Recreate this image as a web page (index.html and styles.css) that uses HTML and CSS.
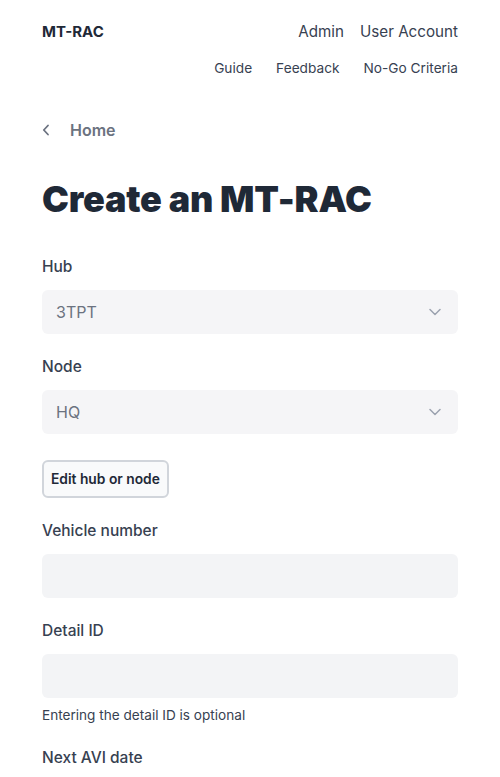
FILE: index.html
```html
<!DOCTYPE html>
<html lang="en">
<head>
<meta charset="utf-8">
<title>Create an MT-RAC</title>
<link rel="stylesheet" href="styles.css">
</head>
<body>
<div class="page">
  <header class="header">
    <div class="brand">MT-RAC</div>
    <div class="nav">
      <div class="nav-main">
        <a href="#">Admin</a>
        <a href="#">User Account</a>
      </div>
      <div class="nav-sub">
        <a href="#">Guide</a>
        <a href="#">Feedback</a>
        <a href="#">No-Go Criteria</a>
      </div>
    </div>
  </header>

  <a class="back" href="#">
    <svg width="8" height="12" viewBox="0 0 8 12" aria-hidden="true"><path d="M6 1.5 L1.8 6 L6 10.5" fill="none" stroke="#6b7280" stroke-width="1.8" stroke-linecap="round" stroke-linejoin="round"/></svg>
    <span>Home</span>
  </a>

  <h1 class="title">Create an MT-RAC</h1>

  <form class="form">
    <div class="field">
      <label class="label">Hub</label>
      <div class="select">
        <span>3TPT</span>
        <svg width="12" height="8" viewBox="0 0 12 8" aria-hidden="true"><path d="M1 1.5 L6 6.5 L11 1.5" fill="none" stroke="#9ca3af" stroke-width="1.5" stroke-linecap="round" stroke-linejoin="round"/></svg>
      </div>
    </div>
    <div class="field">
      <label class="label">Node</label>
      <div class="select">
        <span>HQ</span>
        <svg width="12" height="8" viewBox="0 0 12 8" aria-hidden="true"><path d="M1 1.5 L6 6.5 L11 1.5" fill="none" stroke="#9ca3af" stroke-width="1.5" stroke-linecap="round" stroke-linejoin="round"/></svg>
      </div>
    </div>
    <div class="actions">
      <button type="button" class="btn">Edit hub or node</button>
    </div>
    <div class="field">
      <label class="label">Vehicle number</label>
      <div class="input"></div>
    </div>
    <div class="field">
      <label class="label">Detail ID</label>
      <div class="input"></div>
      <p class="help">Entering the detail ID is optional</p>
    </div>
    <div class="field">
      <label class="label">Next AVI date</label>
    </div>
  </form>
</div>
</body>
</html>
```

FILE: styles.css
```css
* { box-sizing: border-box; }
html, body { margin: 0; padding: 0; background: #fff; }
body {
  font-family: Inter, "Noto Sans", sans-serif;
  color: #374151;
  -webkit-font-smoothing: antialiased;
}
a { text-decoration: none; color: inherit; }
.page { padding: 20px 42px 0; }

.header { display: flex; justify-content: space-between; align-items: flex-start; }
.brand { font-size: 15px; font-weight: 700; line-height: 24px; color: #1f2937; }
.nav { display: flex; flex-direction: column; align-items: flex-end; gap: 14px; }
.nav-main { display: flex; gap: 16px; font-size: 15.2px; line-height: 24px; color: #374151; }
.nav-sub { display: flex; gap: 24px; font-size: 13.7px; line-height: 20px; color: #374151; }

.back {
  display: flex; align-items: center; gap: 20px;
  margin-top: 40px; height: 24px;
  font-size: 16px; font-weight: 600; color: #6b7280;
}

.title {
  margin: 35px 0 0;
  font-size: 36px; line-height: 44px; font-weight: 900;
  color: #1f2937; letter-spacing: -0.2px;
}

.form { margin-top: 33px; display: flex; flex-direction: column; }
.field { display: flex; flex-direction: column; margin-bottom: 20px; }
.label { font-size: 15.5px; font-weight: 500; line-height: 24px; color: #374151; padding-top: 1px; margin-bottom: 11px; }
.select, .input {
  height: 44px; border-radius: 6px; background: #f3f4f6;
}
.select {
  background: #f5f5f7;
  display: flex; align-items: center; justify-content: space-between;
  padding: 0 17px 0 14px;
  font-size: 16px; color: #6b7280;
}
.actions { margin-top: 6px; margin-bottom: 20px; }
.btn {
  font-family: Inter, "Noto Sans", sans-serif;
  height: 38px; padding: 0 7px;
  border: 2px solid #d1d5db; border-radius: 6px;
  background: #f9fafb;
  font-size: 13.8px; font-weight: 600; color: #1f2937;
}
.help { margin: 8px 0 1px; font-size: 13.6px; line-height: 18px; color: #374151; }
```
